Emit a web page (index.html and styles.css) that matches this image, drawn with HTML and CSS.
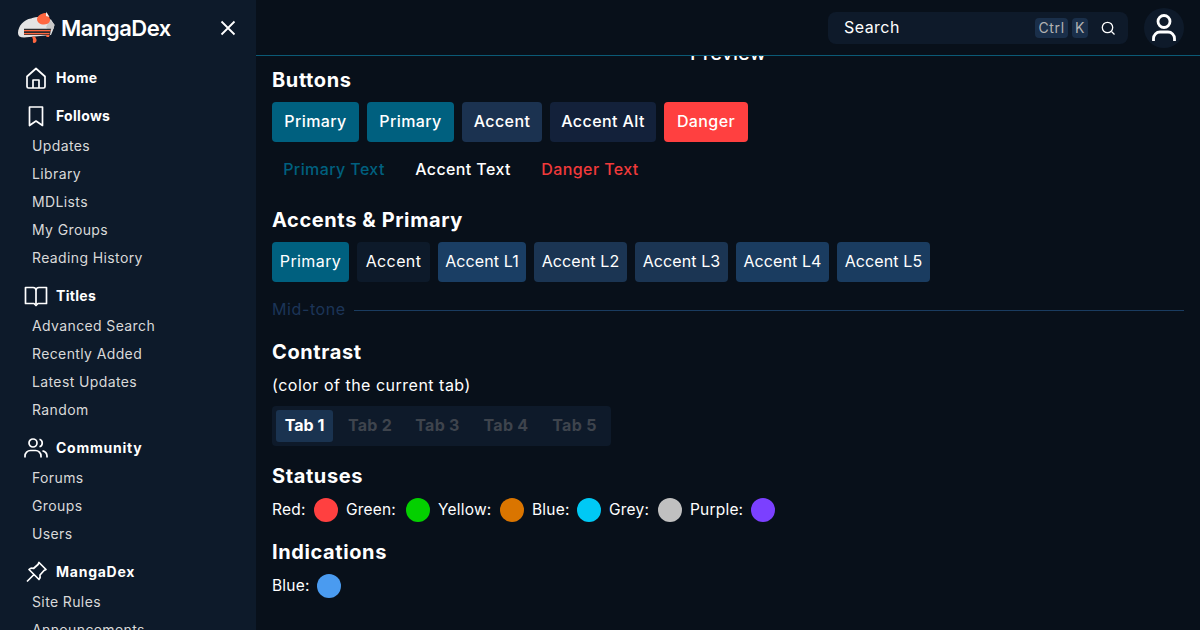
FILE: index.html
```html
<!DOCTYPE html>
<html lang="en">
<head>
<meta charset="utf-8">
<title>MangaDex</title>
<link rel="stylesheet" href="styles.css">
</head>
<body>
<div class="app">
  <aside class="sidebar">
    <div class="brand">
      <div class="logo">
        <svg class="cat" viewBox="0 0 40 36" width="40" height="36">
          <path d="M2 23C2 16 8 9.500 15 8.500C18 7 21 7 23 7L35 9.500L38.500 15L37 20L35 25L8 27.500C4 27.500 2 26 2 23Z" fill="#e4e4e4"/>
          <path d="M34 10L38.500 14.500L37.500 19L33 21L30 17Z" fill="#c9c9c9"/>
          <path d="M21 9C21.500 5.500 25 3.500 29 3L31.500 3.500L34 9C34.500 11.500 32.500 14.500 28 14.500C24 14.500 21 12.500 21 9Z" fill="#ff6740"/>
          <path d="M30 1.800L33.500 7L30 6Z" fill="#f2f2f2"/>
          <path d="M8 18.800H35L34 25H8Z" fill="#2b2b2e"/>
          <path d="M8 20H34.500V21.300H8ZM8 23H33.500V24.200H8Z" fill="#ff6740"/>
          <path d="M30 25H33.500L33 27H30.500Z" fill="#ff6740"/>
          <path d="M16 26.500H19L20.500 29.500C21 31.500 19.500 33 18 33C16.500 33 16.800 31 17 29.500Z" fill="#ff6740"/>
        </svg>
        <span class="logo-text">MangaDex</span>
      </div>
      <svg class="close" viewBox="0 0 16 16" width="16" height="16"><path d="M1.500 1.500L14.500 14.500M14.500 1.500L1.500 14.500"/></svg>
    </div>
    <nav class="nav">
      <section class="nav-group solo">
        <div class="nav-head">
          <svg class="nav-icon" viewBox="0 0 24 24"><path d="M3 10.500L12 2.500L21 10.500V20.500A1.500 1.500 0 0 1 19.500 22H4.500A1.500 1.500 0 0 1 3 20.500ZM9 22V14H15V22"/></svg>
          <span class="lift">Home</span>
        </div>
      </section>
      <section class="nav-group">
        <div class="nav-head">
          <svg class="nav-icon" viewBox="0 0 24 24"><path d="M5.500 3H18.500V21.500L12 17L5.500 21.500Z"/></svg>
          <span class="lift">Follows</span>
        </div>
        <a class="nav-link">Updates</a>
        <a class="nav-link">Library</a>
        <a class="nav-link">MDLists</a>
        <a class="nav-link">My Groups</a>
        <a class="nav-link">Reading History</a>
      </section>
      <section class="nav-group">
        <div class="nav-head">
          <svg class="nav-icon" viewBox="0 0 24 24"><path d="M1.500 3.500H9C11 3.500 12 4.500 12 6.500C12 4.500 13 3.500 15 3.500H22.500V19.500H14L12 21.500L10 19.500H1.500ZM12 6.500V20"/></svg>
          <span class="lift">Titles</span>
        </div>
        <a class="nav-link">Advanced Search</a>
        <a class="nav-link">Recently Added</a>
        <a class="nav-link">Latest Updates</a>
        <a class="nav-link">Random</a>
      </section>
      <section class="nav-group">
        <div class="nav-head">
          <svg class="nav-icon" viewBox="0 0 24 24"><circle cx="9" cy="7" r="4"/><path d="M1 21.500V20A5.500 5.500 0 0 1 6.500 14.500H11.500A5.500 5.500 0 0 1 17 20V21.500M15.500 3.200A4 4 0 0 1 15.500 10.800M18.500 14.800A5.500 5.500 0 0 1 23 20V21.500"/></svg>
          <span class="lift wide">Community</span>
        </div>
        <a class="nav-link">Forums</a>
        <a class="nav-link">Groups</a>
        <a class="nav-link">Users</a>
      </section>
      <section class="nav-group">
        <div class="nav-head">
          <svg class="nav-icon" viewBox="0 0 24 24"><path d="M15 2.500L22 9.500L20 10.500L16 15C16.500 17 16 18.500 15 19.500L5 9.500C6 8.500 8 8 9.500 8.500L14 4.500ZM10 14.500L3 21.500"/></svg>
          <span class="lift wide">MangaDex</span>
        </div>
        <a class="nav-link">Site Rules</a>
        <a class="nav-link">Announcements</a>
      </section>
    </nav>
  </aside>
  <div class="main">
    <header class="topbar">
      <div class="search">
        <span class="search-label">Search</span>
        <kbd class="key">Ctrl</kbd>
        <kbd class="key">K</kbd>
        <svg class="search-icon" viewBox="0 0 16 16" width="16" height="16"><circle cx="7.500" cy="7.500" r="5.200"/><path d="M11.500 11.500L14.500 14.500"/></svg>
      </div>
      <div class="avatar">
        <svg viewBox="0 0 40 40" width="40" height="40"><circle cx="20" cy="13.500" r="6"/><path d="M9.500 33V30.500A6.500 6.500 0 0 1 16 24H24A6.500 6.500 0 0 1 30.500 30.500V33"/></svg>
      </div>
    </header>
    <main class="content">
      <div class="page-title">Preview</div>
      <h2 class="heading">Buttons</h2>
      <div class="row">
        <button class="btn bg-primary w87">Primary</button>
        <button class="btn bg-primary w87">Primary</button>
        <button class="btn bg-accent w80">Accent</button>
        <button class="btn bg-accent-alt w106">Accent Alt</button>
        <button class="btn bg-danger w84">Danger</button>
      </div>
      <div class="row row-text">
        <button class="btn text-primary w124">Primary Text</button>
        <button class="btn text-accent w118">Accent Text</button>
        <button class="btn text-danger w120">Danger Text</button>
      </div>
      <h2 class="heading spaced">Accents &amp; Primary</h2>
      <div class="row">
        <div class="swatch bg-primary w77">Primary</div>
        <div class="swatch bg-base w73">Accent</div>
        <div class="swatch tight bg-l1 w88">Accent L1</div>
        <div class="swatch tight bg-l2 w93">Accent L2</div>
        <div class="swatch tight bg-l2 w93">Accent L3</div>
        <div class="swatch tight bg-l4 w93">Accent L4</div>
        <div class="swatch tight bg-l4 w93">Accent L5</div>
      </div>
      <div class="midtone"><span class="lift">Mid-tone</span><i class="rule"></i></div>
      <h2 class="heading spaced compact">Contrast</h2>
      <p class="note">(color of the current tab)</p>
      <div class="tabs">
        <div class="tab active w57">Tab 1</div>
        <div class="tab w60">Tab 2</div>
        <div class="tab w61">Tab 3</div>
        <div class="tab w62">Tab 4</div>
        <div class="tab w61">Tab 5</div>
      </div>
      <h2 class="heading spaced">Statuses</h2>
      <div class="dots">
        <span class="dot-label w34">Red:</span><i class="dot red"></i>
        <span class="dot-label w52">Green:</span><i class="dot green"></i>
        <span class="dot-label w54">Yellow:</span><i class="dot yellow"></i>
        <span class="dot-label w37">Blue:</span><i class="dot blue"></i>
        <span class="dot-label w41">Grey:</span><i class="dot grey"></i>
        <span class="dot-label w53">Purple:</span><i class="dot purple"></i>
      </div>
      <h2 class="heading spaced">Indications</h2>
      <div class="dots">
        <span class="dot-label w37">Blue:</span><i class="dot info"></i>
      </div>
    </main>
  </div>
</div>
</body>
</html>
```
FILE: styles.css
```css
* { box-sizing: border-box; }
html, body { margin: 0; height: 100%; overflow: hidden; }
body {
  background: #08101a;
  color: #fff;
  font-family: Inter, "Noto Sans", sans-serif;
  font-size: 16px;
}
.app { display: flex; height: 630px; overflow: hidden; }
.lift { padding-bottom: 2px; }

.sidebar { width: 256px; flex: none; background: #0d1a2a; overflow: hidden; }
.brand { height: 56px; display: flex; align-items: center; justify-content: space-between; padding: 0 20px 0 16px; }
.logo { display: flex; align-items: center; gap: 5px; }
.cat { display: block; }
.logo-text { font-size: 22px; font-weight: 600; letter-spacing: -0.5px; }
.close { fill: none; stroke: #fff; stroke-width: 1.800; }
.nav { display: flex; flex-direction: column; gap: 8px; padding: 6px 16px 0 24px; }
.nav-group.solo { margin-bottom: -2px; }
.nav-head { height: 32px; display: flex; align-items: center; gap: 8px; font-size: 14px; font-weight: 700; letter-spacing: 0.3px; }
.nav-head .wide { letter-spacing: 0.75px; }
.nav-icon { width: 24px; height: 24px; flex: none; fill: none; stroke: #fff; stroke-width: 1.700; stroke-linejoin: round; }
.nav-link { display: flex; align-items: center; height: 28px; padding: 0 0 2px 8px; font-size: 14px; color: #d9d9d9; letter-spacing: 0.38px; white-space: nowrap; }

.main { flex: 1; min-width: 0; display: flex; flex-direction: column; overflow: hidden; }
.topbar { height: 56px; flex: none; position: relative; z-index: 1; background: #08101a; border-bottom: 1px solid #0b5a76; display: flex; align-items: center; justify-content: flex-end; padding: 0 16px; gap: 16px; }
.search { width: 300px; height: 32px; background: #0e1a2a; border-radius: 8px; display: flex; align-items: center; padding: 0 12px 0 16px; gap: 4px; }
.search-label { flex: 1; font-size: 16px; letter-spacing: 0.45px; padding-bottom: 1px; }
.key { height: 20px; padding: 0 3px; min-width: 16px; display: flex; align-items: center; justify-content: center; background: #1a2f4a; border-radius: 4px; color: #b3b3b3; font-family: inherit; font-size: 14px; letter-spacing: 0.7px; }
.search-icon { margin-left: 8px; fill: none; stroke: #fff; stroke-width: 1.300; }
.avatar { width: 40px; height: 40px; border-radius: 50%; background: #0e1a2a; }
.avatar svg { display: block; fill: none; stroke: #fff; stroke-width: 2.800; }

.content { margin-top: -13px; padding: 0 16px; }
.page-title { height: 20px; line-height: 20px; text-align: center; font-size: 20px; font-weight: 500; }
.heading { margin: 2px 0 7px; height: 30px; line-height: 30px; font-size: 20px; font-weight: 700; letter-spacing: 0.6px; }
.heading.spaced { margin-top: 15px; }
.heading.compact { margin-bottom: 6px; }
.row { display: flex; gap: 8px; }
.row-text { margin-top: 8px; }
.btn, .swatch { height: 40px; display: flex; align-items: center; justify-content: center; border: 0; border-radius: 4px; color: #fff; font-family: inherit; font-size: 16px; font-weight: 500; letter-spacing: 0.4px; padding: 0 0 2px; white-space: nowrap; }
.swatch { font-weight: 400; }
.swatch.tight { letter-spacing: 0.1px; }
.row-text .btn { background: transparent; }
.bg-primary { background: #00607f; }
.bg-accent { background: #1b3250; }
.bg-accent-alt { background: #13213a; }
.bg-danger { background: #ff4040; }
.bg-base { background: #0d1a2a; }
.bg-l1 { background: #1a3e64; }
.bg-l2 { background: #1b3553; }
.bg-l4 { background: #1a3c60; }
.row-text .text-primary { color: #00607f; }
.row-text .text-accent { color: #fff; }
.row-text .text-danger { color: #f03a3a; }
.w34 { width: 34px; } .w37 { width: 37px; } .w41 { width: 41px; } .w52 { width: 52px; } .w53 { width: 53px; } .w54 { width: 54px; }
.w57 { width: 57px; } .w60 { width: 60px; } .w61 { width: 61px; } .w62 { width: 62px; }
.w73 { width: 73px; } .w77 { width: 77px; } .w80 { width: 80px; } .w84 { width: 84px; } .w87 { width: 87px; } .w88 { width: 88px; }
.w93 { width: 93px; } .w106 { width: 106px; } .w118 { width: 118px; } .w120 { width: 120px; } .w124 { width: 124px; }

.midtone { margin-top: 16px; height: 24px; display: flex; align-items: center; gap: 8px; color: #1c3558; font-size: 16px; letter-spacing: 0.6px; }
.rule { flex: 1; height: 1px; background: #1a3c60; }
.note { margin: 0 0 9px; line-height: 24px; font-size: 16px; letter-spacing: 0.5px; }
.tabs { width: 339px; height: 40px; background: #0e1a2a; border-radius: 4px; padding: 4px; display: flex; gap: 7px; }
.tab { height: 32px; padding-bottom: 2px; display: flex; align-items: center; justify-content: center; border-radius: 3px; color: #3e444d; font-weight: 700; font-size: 16px; letter-spacing: 0.3px; }
.tab.active { background: #1a3350; color: #fff; letter-spacing: 0; }
.dots { display: flex; align-items: center; height: 24px; }
.dot-label { flex: none; font-size: 15.500px; letter-spacing: 0.2px; white-space: nowrap; margin-right: 8px; padding-bottom: 2px; }
.dot { flex: none; width: 24px; height: 24px; border-radius: 50%; margin-right: 8px; }
.red { background: #ff4040; }
.green { background: #04d000; }
.yellow { background: #da7500; }
.blue { background: #00c9f5; }
.grey { background: #c0c0c0; }
.purple { background: #7b40ff; }
.info { background: #4a9bf0; }
```
